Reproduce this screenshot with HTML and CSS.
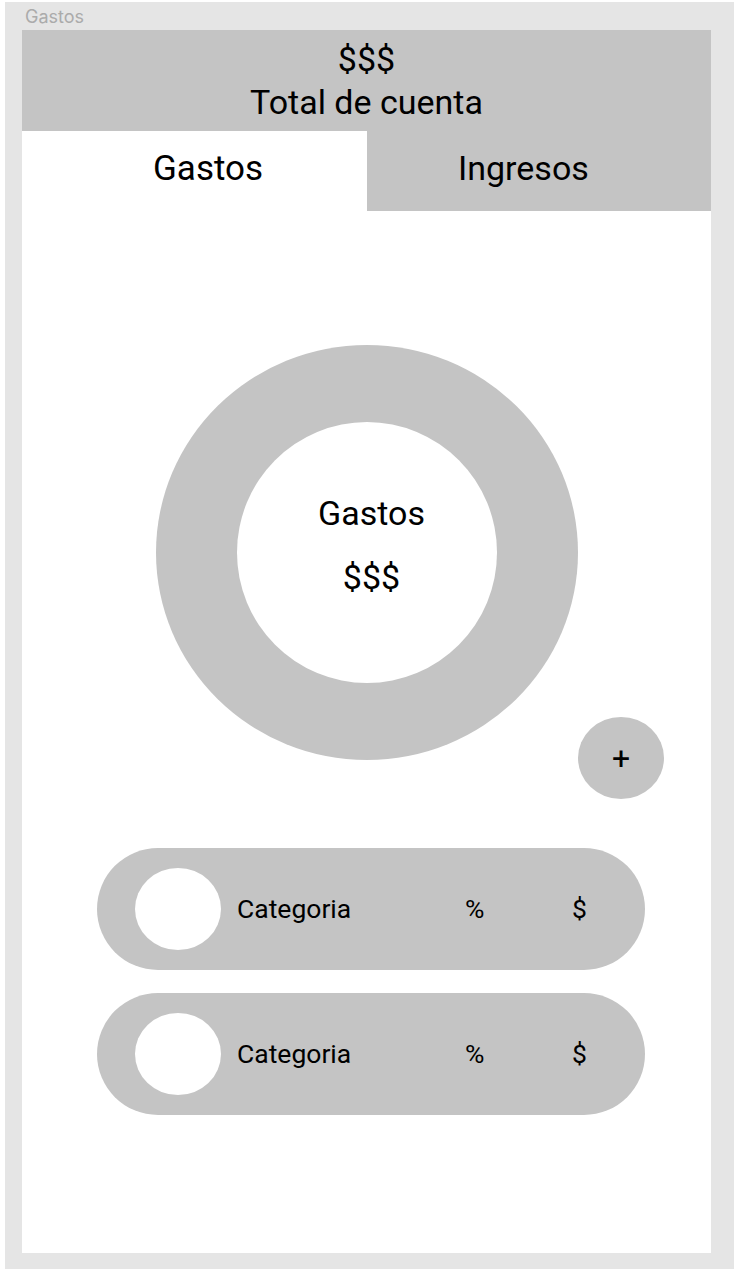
FILE: index.html
```html
<!DOCTYPE html>
<html lang="es">
<head>
<meta charset="utf-8">
<title>Gastos</title>
<link rel="stylesheet" href="styles.css">
</head>
<body>
<div class="canvas">
  <div class="frame-label">Gastos</div>
  <div class="frame">
    <header class="total">
      <div class="total-line">$$$</div>
      <div class="total-line">Total de cuenta</div>
    </header>
    <nav class="tabs">
      <div class="tab tab-active">Gastos</div>
      <div class="tab tab-inactive">Ingresos</div>
    </nav>
    <section class="chart">
      <div class="donut">
        <div class="donut-hole">
          <span class="donut-text">Gastos</span>
          <span class="donut-text">$$$</span>
        </div>
      </div>
      <button class="fab" type="button">+</button>
    </section>
    <section class="list">
      <div class="row">
        <div class="row-icon"></div>
        <div class="row-name">Categoria</div>
        <div class="row-pct">%</div>
        <div class="row-amt">$</div>
      </div>
      <div class="row">
        <div class="row-icon"></div>
        <div class="row-name">Categoria</div>
        <div class="row-pct">%</div>
        <div class="row-amt">$</div>
      </div>
    </section>
  </div>
</div>
</body>
</html>
```

FILE: styles.css
```css
html, body {
  margin: 0;
  padding: 0;
  background: #ffffff;
}

.canvas {
  box-sizing: border-box;
  margin: 2px 0 0 5px;
  width: 729px;
  height: 1267px;
  padding: 0 23px 16px 17px;
  background: #e5e5e5;
  display: flex;
  flex-direction: column;
}

.frame-label {
  height: 28px;
  box-sizing: border-box;
  padding: 1px 0 0 3px;
  line-height: 27px;
  font-family: Inter, "Noto Sans", sans-serif;
  font-size: 18px;
  color: #ababab;
}

.frame {
  flex: 1;
  background: #ffffff;
  display: flex;
  flex-direction: column;
  font-family: Roboto, "Liberation Sans", sans-serif;
  color: #000000;
}

.total {
  height: 101px;
  box-sizing: border-box;
  padding-top: 8px;
  background: #c4c4c4;
  text-align: center;
  font-size: 34px;
  line-height: 43px;
}

.tabs {
  display: flex;
  height: 80px;
}

.tab {
  box-sizing: border-box;
  font-size: 35px;
  line-height: 75px;
}

.tab-active {
  width: 345px;
  padding-left: 131px;
  background: #ffffff;
}

.tab-inactive {
  width: 344px;
  padding-left: 91px;
  background: #c4c4c4;
  font-size: 34px;
}

.chart {
  position: relative;
  height: 637px;
  box-sizing: border-box;
  padding-top: 134px;
  display: flex;
  flex-direction: column;
  align-items: center;
}

.donut {
  width: 422px;
  height: 415px;
  border-radius: 50%;
  background: #c4c4c4;
  display: flex;
  align-items: center;
  justify-content: center;
}

.donut-hole {
  width: 260px;
  height: 261px;
  box-sizing: border-box;
  padding: 0 0 16px 10px;
  border-radius: 50%;
  background: #ffffff;
  display: flex;
  flex-direction: column;
  align-items: center;
  justify-content: center;
}

.donut-text {
  font-size: 34px;
  line-height: 64px;
}

.fab {
  position: absolute;
  left: 556px;
  top: 506px;
  width: 86px;
  height: 82px;
  border: none;
  border-radius: 50%;
  background: #c4c4c4;
  padding: 0;
  font-family: Roboto, "Liberation Sans", sans-serif;
  font-size: 32px;
  line-height: 82px;
  color: #000000;
}

.list {
  display: flex;
  flex-direction: column;
  gap: 23px;
  padding-left: 75px;
}

.row {
  width: 548px;
  height: 122px;
  box-sizing: border-box;
  padding: 0 0 1px 38px;
  border-radius: 61px;
  background: #c4c4c4;
  display: flex;
  align-items: center;
  font-size: 26.5px;
}

.row-icon {
  width: 86px;
  height: 82px;
  border-radius: 50%;
  background: #ffffff;
  flex: none;
}

.row-name {
  margin-left: 16px;
  width: 228px;
}

.row-pct {
  width: 107px;
}

.row-amt {
  width: 40px;
}
```
